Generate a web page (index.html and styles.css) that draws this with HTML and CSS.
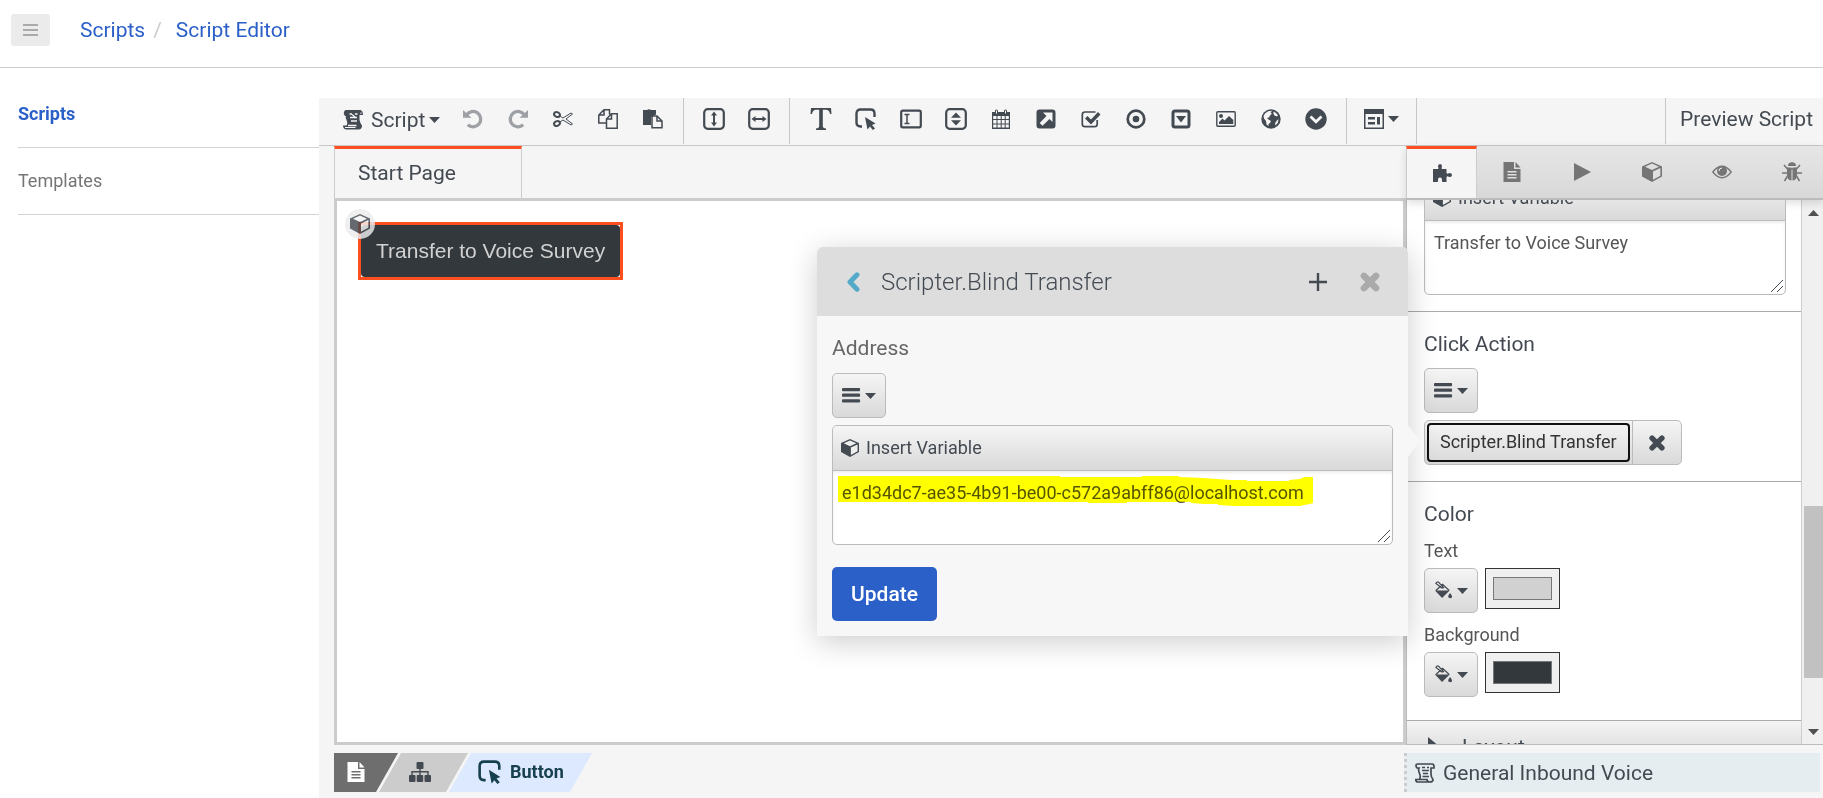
FILE: index.html
```html
<!DOCTYPE html>
<html lang="en">
<head>
<meta charset="utf-8">
<title>Script Editor</title>
<link rel="stylesheet" href="styles.css">
</head>
<body>
<svg class="symbols" aria-hidden="true">
  <symbol id="cube" viewBox="0 0 20 20"><path d="M10 0 20 4.500V14.500L10 20 0 14.500V4.500Z"/><path class="paper" d="M10 1.600 17 4.700 10 8 3 4.700Z M18.400 6 V13.700 L11 17.800 V9.400Z"/></symbol>
  <symbol id="doc" viewBox="0 0 20 20"><path d="M1.500 0H12V7H18.500V20H1.500Z M13.500 0 18.500 5.500H13.500Z"/><path class="cut" d="M5.500 9H14.500V10.400H5.500Z M5.500 12H14.500V13.400H5.500Z M5.500 15H14.500V16.400H5.500Z"/></symbol>
  <symbol id="bars" viewBox="0 0 20 20"><rect x="0" y="2" width="19" height="3.400" rx="1"/><rect x="0" y="8" width="19" height="3.400" rx="1"/><rect x="0" y="14" width="19" height="3.400" rx="1"/></symbol>
  <symbol id="caret" viewBox="0 0 11 6"><path d="M0 0H11L5.500 6Z"/></symbol>
  <symbol id="grip" viewBox="0 0 12 12"><path class="line" stroke-width="1" d="M0 12 12 0M6 12 12 6"/></symbol>
  <symbol id="turn" viewBox="0 0 20 20"><path d="M0 1 8.500 8.800H0Z"/><path class="line" stroke-width="3.300" d="M3.500 6A7.700 7.700 0 1 1 4.800 15.800"/></symbol>
  <symbol id="cross" viewBox="0 0 20 20"><path class="line" stroke-width="6" stroke-linecap="round" d="M4.500 4.500 15.500 15.500M15.500 4.500 4.500 15.500"/></symbol>
  <symbol id="pointer" viewBox="0 0 22 22"><path class="line" stroke-width="2.400" d="M7 18.500H5.500Q1.500 18.500 1.500 14.500V5.500Q1.500 1.500 5.500 1.500H15.500Q19.500 1.500 19.500 5.500V9"/><path d="M10 9 20.500 15.500 17 17 20 20.500 17.800 22 15 18.500 12.500 21.500Z"/></symbol>
  <symbol id="bucket" viewBox="0 0 20 20"><path d="M1 10H16.500L8.500 18Z M17 12.500Q20 16.500 18.500 17.600Q17 18.600 15.300 17.300Q14 16 17 12.500Z"/><path class="line" stroke-width="1.300" d="M2 10 9 3.500 16 10M2 2.500Q4-.5 6 2.500L10 7Q8 8 6.500 6Z"/></symbol>
  <symbol id="scroll" viewBox="0 0 20 20"><path class="line" stroke-width="1.700" d="M3 1H17Q19 1 19 3.500V5H16V11Q16 14 18 16.500Q18 19 15 19H3Q.8 19 .8 16.500H12Q12 19 15 19M4.500 16Q6 14 4.500 10.500Q3 7 4 5H2Q1 4 1 2.500Q1 1 3 1"/><path class="line" stroke-width="1.500" d="M7 4.500H10M7 7.500H14M8 10.500H13M12 4.500H14M7.500 13.500H14"/></symbol>
</svg>

<header class="topbar">
  <button class="menu-toggle" aria-label="Toggle menu"><svg viewBox="0 0 15 12"><path d="M0 0H15V2H0ZM0 5H15V7H0ZM0 10H15V12H0Z"/></svg></button>
  <nav class="crumbs" aria-label="Breadcrumb"><a href="#">Scripts</a><span class="slash">/</span><a href="#">Script Editor</a></nav>
</header>

<div class="page">
  <nav class="side">
    <a class="side-link current" href="#">Scripts</a>
    <a class="side-link" href="#">Templates</a>
  </nav>

  <main class="editor">
    <div class="toolbar">
      <button class="script-menu"><svg class="i20" viewBox="0 0 20 20"><path d="M3 0H17.500Q20 1 20 5H16.500V10Q17 13 19 15.500Q19 19.500 15.500 19.500H3Q0 19 0 15.500H3.500Q5 14 3.500 10Q2 7 3 6H2Q0 4.500 1 2Q1.500 0 3 0Z"/><path class="line light" stroke-width="1.300" d="M6.500 4H9M12 4H14.500M7 7.500H14M8 11H14M9 4.500 12 7M5 15.500H13.500"/><path class="line light" stroke-width="1" d="M2 17.500H12.500M18 2.500V4"/></svg><span>Script</span><svg class="caret"><use href="#caret"/></svg></button>
      <div class="group">
        <button class="tool off" aria-label="Undo"><svg class="i20"><use href="#turn"/></svg></button>
        <button class="tool off flip" aria-label="Redo"><svg class="i20"><use href="#turn"/></svg></button>
        <button class="tool" aria-label="Cut"><svg class="i20" viewBox="0 0 20 20"><g class="line"><ellipse cx="4" cy="5.500" rx="3" ry="2.300" stroke-width="2" transform="rotate(25 4 5.500)"/><ellipse cx="4" cy="14.500" rx="3" ry="2.300" stroke-width="2" transform="rotate(-25 4 14.500)"/><path stroke-width="1" d="M7 7 10 9 18 4 19.500 5 13 10 19.500 15 18 16 10 11 7 13"/></g></svg></button>
        <button class="tool" aria-label="Copy"><svg class="i20" viewBox="0 0 20 20"><path class="line" stroke-width="1.500" d="M8 14H.8V6L6 .8H11.500V5.500M6 1V6H1M8.500 19.200V10L13.500 4.800H19.200V19.200ZM13.500 5V10H8.500"/></svg></button>
        <button class="tool" aria-label="Paste"><svg class="i20" viewBox="0 0 20 20"><path d="M0 1H4Q6-.5 8 1H13V5.500L8 8V16H0Z"/><path class="line" stroke-width="1.500" d="M9 7H14L19 12V18.700H9ZM14 7V12H19"/></svg></button>
      </div>
      <div class="group sizing">
        <button class="tool" aria-label="Vertical container"><svg class="i22" viewBox="0 0 22 22"><rect class="line" x="1.200" y="1.200" width="19.600" height="19.600" rx="3.500" stroke-width="2.200"/><path d="M11 3.500 14 7.500H12V14.500H14L11 18.500 8 14.500H10V7.500H8Z"/></svg></button>
        <button class="tool" aria-label="Horizontal container"><svg class="i22" viewBox="0 0 22 22"><rect class="line" x="1.200" y="1.200" width="19.600" height="19.600" rx="3.500" stroke-width="2.200"/><path d="M3.500 11 7.500 8V10H14.500V8L18.500 11 14.500 14V12H7.500V14Z"/></svg></button>
      </div>
      <div class="group">
        <button class="tool" aria-label="Text"><svg class="i22" viewBox="0 0 22 22"><path d="M1 0H21L21.500 6H20Q19.500 2 16 1.800H12.800V18Q12.800 20.300 16 20.500V22H6V20.500Q9.200 20.300 9.200 18V1.800H6Q2.500 2 2 6H.5Z"/></svg></button>
        <button class="tool" aria-label="Button"><svg class="i22"><use href="#pointer"/></svg></button>
        <button class="tool" aria-label="Text input"><svg class="i22" viewBox="0 0 22 22"><rect class="line" x="1.200" y="2.700" width="19.600" height="16.600" rx="1.500" stroke-width="2.200"/><path class="line" stroke-width="1.500" d="M4.500 6.500H9.500M4.500 15.500H9.500M7 6.500V15.500"/></svg></button>
        <button class="tool" aria-label="Number input"><svg class="i22" viewBox="0 0 22 22"><rect class="line" x="1.200" y="1.200" width="19.600" height="19.600" rx="3.500" stroke-width="2.200"/><path d="M11 4.500 16 9.800H6ZM11 17.500 16 12.200H6Z"/></svg></button>
        <button class="tool" aria-label="Date picker"><svg class="i20" viewBox="0 0 20 20"><path d="M1 3H4V1.500Q5.500-.5 7 1.500V3H13V1.500Q14.500-.5 16 1.500V3H19V20H1Z"/><path class="line light" stroke-width="1" d="M5.500 1.500V4.500M14.500 1.500V4.500"/><path class="paper" d="M2.200 7H5.500V10H2.200ZM6.500 7H9.700V10H6.500ZM10.700 7H13.700V10H10.700ZM14.700 7H17.800V10H14.700ZM2.200 11H5.500V14.500H2.200ZM6.500 11H9.700V14.500H6.500ZM10.700 11H13.700V14.500H10.700ZM14.700 11H17.800V14.500H14.700ZM2.200 15.500H5.500V18.500H2.200ZM6.500 15.500H9.700V18.500H6.500ZM10.700 15.500H13.700V18.500H10.700ZM14.700 15.500H17.800V18.500H14.700Z"/></svg></button>
        <button class="tool" aria-label="Hyperlink"><svg class="i20" viewBox="0 0 20 20"><rect x=".5" y=".5" width="19" height="19" rx="3"/><path class="paper" d="M7 3.500H16.500V13L13.500 10 6.500 16.800 3.700 14 10.500 7Z"/></svg></button>
        <button class="tool" aria-label="Checkbox"><svg class="i20" viewBox="0 0 20 20"><path class="line" stroke-width="1.700" d="M14.500 3H4Q1.300 3 1.300 5.700V15Q1.300 17.700 4 17.700H13.500Q16.200 17.700 16.200 15V11"/><path d="M4 9.500 6.500 7 10 10.500 17 3 19.500 5.500 10 15.500Z"/></svg></button>
        <button class="tool" aria-label="Radio button"><svg class="i20" viewBox="0 0 20 20"><circle class="line" cx="10" cy="10" r="8.300" stroke-width="2.700"/><circle cx="10" cy="10" r="3.300"/></svg></button>
        <button class="tool" aria-label="Dropdown"><svg class="i20" viewBox="0 0 20 20"><rect class="line" x="2" y="2" width="16" height="16" rx="2" stroke-width="3"/><path d="M5 7H15L10 13.500Z"/></svg></button>
        <button class="tool" aria-label="Image"><svg class="i20" viewBox="0 0 20 20"><rect class="line" x=".8" y="2.800" width="18.400" height="14.400" rx="1" stroke-width="1.400"/><circle cx="5" cy="7" r="2"/><path d="M3 15V13L6.500 9.500 8.500 11.500 13 7 17.300 11V15Z"/></svg></button>
        <button class="tool" aria-label="Web page"><svg class="i20" viewBox="0 0 20 20"><circle cx="10" cy="10" r="9.700"/><path class="paper" d="M4 4.500 7 2.200 11 1.800 9.500 3.800 11 4.500 9 6.500 8 8.500 6 9 7.500 10.500 10 12 9 14 7.500 15 7.500 17 5.500 15.500 5 12 3 9.500 2.500 7ZM12.500 2.500 15 4 17 6.500 15.500 7.500 13.500 6.500 12.500 5ZM17.500 10 17 13.500 14.500 16.500 14 14.500 15.500 12Z"/></svg></button>
        <button class="tool" aria-label="Collapse section"><svg class="i22" viewBox="0 0 22 22"><circle cx="11" cy="11" r="10.700"/><path class="line light" stroke-width="2.800" d="M5.500 8.500 11 13.800 16.500 8.500"/></svg></button>
      </div>
      <button class="layout-menu" aria-label="Layout"><svg class="i20" viewBox="0 0 20 20"><path d="M0 0H20V20H0Z"/><path class="paper" d="M1.500 5H18.500V18.500H1.500Z"/><path d="M4 8H11V10.500H4ZM4 13H11V15.500H4ZM13 8H16V15.500H13Z"/></svg><svg class="caret"><use href="#caret"/></svg></button>
      <button class="preview">Preview Script</button>
    </div>

    <div class="work">
      <section class="stage">
        <div class="page-tabs"><button class="page-tab">Start Page</button></div>
        <div class="canvas">
          <div class="selected">
            <button class="script-button">Transfer to Voice Survey</button>
            <span class="badge"><svg class="i20"><use href="#cube"/></svg></span>
          </div>
        </div>
      </section>

      <aside class="panel">
        <div class="panel-tabs">
          <button class="panel-tab active" aria-label="Components"><svg class="i20" viewBox="0 0 20 20"><path d="M1 6H6.200Q7 5.200 6 3.500Q6 1 8 1Q10.200 1 10 3.500Q9 5.200 10 6H14.500V10Q15.500 11.500 17 10Q20 10 20 12Q20 14.500 17 14Q15.500 12.500 14.500 14V19H10.500Q9.500 18 10 16.500Q10 14.500 8 14.500Q6 14.500 6 16.500Q6.500 18 5.500 19H1Z"/></svg></button>
          <button class="panel-tab" aria-label="Page"><svg class="i20"><use href="#doc"/></svg></button>
          <button class="panel-tab" aria-label="Actions"><svg class="i20" viewBox="0 0 20 20"><path d="M2 1 19 10 2 19Z"/></svg></button>
          <button class="panel-tab" aria-label="Variables"><svg class="i20"><use href="#cube"/></svg></button>
          <button class="panel-tab" aria-label="Visibility"><svg class="i20" viewBox="0 0 20 20"><path class="line" stroke-width="1.300" d="M.8 10Q10-1.500 19.200 10Q10 21.500.8 10Z"/><circle cx="10" cy="9" r="5"/><path class="line light" stroke-width="1" d="M7 9Q7 6 10 6"/></svg></button>
          <button class="panel-tab" aria-label="Debug"><svg class="i20" viewBox="0 0 20 20"><path d="M6 4Q6 .3 10 .3T14 4ZM5 5.500H9.500V18.500Q5 18 5 13ZM10.500 5.500H15V13Q15 18 10.500 18.500Z"/><path class="line" stroke-width="1.500" d="M2 3 5.500 7H14.500L18 3M0 11H5M15 11H20M5.500 14 2.500 19M14.500 14 17.500 19"/></svg></button>
        </div>
        <div class="panel-body">
          <div class="props">
            <section class="prop clipped">
              <div class="variable-box">
                <button class="insert"><svg class="i18"><use href="#cube"/></svg>Insert Variable</button>
                <textarea class="value" aria-label="Button text">Transfer to Voice Survey</textarea>
                <svg class="grip"><use href="#grip"/></svg>
              </div>
            </section>
            <section class="prop">
              <h2>Click Action</h2>
              <button class="chip" aria-label="Action options"><svg class="i19"><use href="#bars"/></svg><svg class="caret"><use href="#caret"/></svg></button>
              <div class="action"><button class="action-name">Scripter.Blind Transfer</button><button class="action-remove" aria-label="Remove action"><svg class="i18"><use href="#cross"/></svg></button></div>
            </section>
            <section class="prop colors">
              <h2>Color</h2>
              <label for="text-color">Text</label>
              <div class="pick"><button class="chip" aria-label="Text color options"><svg class="i19"><use href="#bucket"/></svg><svg class="caret"><use href="#caret"/></svg></button><input id="text-color" type="color" value="#d1d1d1"></div>
              <label for="background-color">Background</label>
              <div class="pick"><button class="chip" aria-label="Background color options"><svg class="i19"><use href="#bucket"/></svg><svg class="caret"><use href="#caret"/></svg></button><input id="background-color" type="color" value="#33383d"></div>
            </section>
            <button class="fold"><svg viewBox="0 0 12 20"><path d="M0 0 12 10 0 20Z"/></svg>Layout</button>
          </div>
          <div class="scrollbar"><svg class="caret"><path d="M0 6H11L5.500 0Z"/></svg><div class="thumb"></div><svg class="caret"><use href="#caret"/></svg></div>
        </div>

        <div class="popup" role="dialog" aria-labelledby="popup-title">
          <div class="popup-head">
            <button class="back" aria-label="Back"><svg class="i20" viewBox="0 0 20 20"><path class="line" stroke-width="5" stroke-linejoin="round" stroke-linecap="round" d="M13 2.800 6 10 13 17.200"/></svg></button>
            <h2 id="popup-title">Scripter.Blind Transfer</h2>
            <button class="add" aria-label="Add"><svg class="i18" viewBox="0 0 18 18"><path d="M7.800 0H10.200V7.800H18V10.200H10.200V18H7.800V10.200H0V7.800H7.800Z"/></svg></button>
            <button class="close" aria-label="Close"><svg class="i22"><use href="#cross"/></svg></button>
          </div>
          <div class="popup-body">
            <label for="address">Address</label>
            <button class="chip" aria-label="Address options"><svg class="i19"><use href="#bars"/></svg><svg class="caret"><use href="#caret"/></svg></button>
            <div class="variable-box">
              <button class="insert"><svg class="i18"><use href="#cube"/></svg>Insert Variable</button>
              <textarea class="value" id="address" spellcheck="false">e1d34dc7-ae35-4b91-be00-c572a9abff86@localhost.com</textarea>
              <svg class="marker" viewBox="0 0 475 30"><path d="M0 0H222V1H304V0H341V1L365 2 379 3 393 4H409V5H451V4L462 3 464 2 467 1H475V27L472 28 466 29 463 30H396L380 29V28H366L353 27V26H289V27H250V26H0Z"/></svg>
              <svg class="grip"><use href="#grip"/></svg>
            </div>
            <button class="update">Update</button>
          </div>
        </div>
      </aside>
    </div>

    <footer class="status">
      <nav class="path" aria-label="Component path">
        <button class="step page-step" aria-label="Page"><svg class="i20"><use href="#doc"/></svg></button>
        <button class="step tree-step" aria-label="Component tree"><svg class="i22" viewBox="0 0 22 20"><rect x="7.500" y="0" width="7" height="7" rx="1"/><rect x="0" y="13" width="6.500" height="7" rx="1"/><rect x="7.700" y="13" width="6.500" height="7" rx="1"/><rect x="15.500" y="13" width="6.500" height="7" rx="1"/><path class="line" stroke-width="1.400" d="M11 7V13M3 13V9.800H19V13"/></svg></button>
        <button class="step button-step"><svg class="i24"><use href="#pointer"/></svg>Button</button>
      </nav>
      <div class="script-name"><svg class="i20"><use href="#scroll"/></svg>General Inbound Voice</div>
    </footer>
  </main>
</div>
</body>
</html>
```

FILE: styles.css
```css
* { box-sizing: border-box; }

body {
  margin: 0;
  height: 100vh;
  display: flex;
  flex-direction: column;
  overflow: hidden;
  background: #fff;
  color: #444a52;
  font: 18px/24px Roboto, sans-serif;
}

button {
  padding: 0;
  border: 0;
  background: none;
  color: inherit;
  font: inherit;
}

a { text-decoration: none; }
h2 { margin: 0; font-size: 21px; font-weight: 400; }
svg { display: block; flex: none; fill: currentColor; }
.symbols { position: absolute; width: 0; height: 0; }
.line { fill: none; stroke: currentColor; }
.light { stroke: #f5f5f5; }
.paper, .cut { fill: var(--paper, #f5f5f5); }
.i18 { width: 18px; height: 18px; }
.i19 { width: 19px; height: 19px; }
.i20 { width: 20px; height: 20px; }
.i22 { width: 22px; height: 22px; }
.i24 { width: 24px; height: 24px; }
.caret { width: 11px; height: 6px; }

/* Top bar */
.topbar {
  flex: none;
  display: flex;
  align-items: center;
  height: 68px;
  padding: 0 11px 7px;
  border-bottom: 1px solid #ccc;
}
.menu-toggle {
  display: grid;
  place-items: center;
  width: 39px;
  height: 32px;
  border-radius: 3px;
  background: #ebebeb;
  color: #aaa;
}
.menu-toggle svg { width: 15px; height: 12px; }
.crumbs { display: flex; margin-left: 30px; font-size: 21px; }
.crumbs a { color: #2a60c8; }
.slash { margin: 0 14px 0 8px; color: #ccc; }

.page { flex: 1; min-height: 0; display: flex; }

/* Side navigation */
.side { flex: none; width: 319px; padding: 13px 0 0 18px; }
.side-link {
  display: block;
  padding: 21px 0;
  border-bottom: 1px solid #d3d3d3;
  color: #757575;
}
.side-link.current { color: #2a60c8; font-weight: 700; }

/* Editor */
.editor {
  flex: 1;
  min-width: 0;
  display: flex;
  flex-direction: column;
  margin-top: 30px;
  background: #f5f5f5;
}
.toolbar {
  flex: none;
  display: flex;
  height: 48px;
  padding-left: 24px;
  border-bottom: 1px solid #c8c8c8;
}
.toolbar > * { height: 46px; }
.script-menu {
  display: flex;
  align-items: center;
  width: 99px;
  padding-bottom: 2px;
  font-size: 21px;
}
.script-menu span { margin: 0 4px 0 8px; }
.group { display: flex; padding: 0 8px; border-right: 1px solid #c8c8c8; }
.sizing { padding-left: 7px; }
.tool { display: grid; place-items: center; width: 45px; padding-bottom: 4px; }
.tool.off { color: #9da0a4; }
.flip svg { transform: scaleX(-1); }
.layout-menu {
  display: flex;
  align-items: center;
  gap: 4px;
  padding: 0 17px 4px;
  border-right: 1px solid #c8c8c8;
}
.preview {
  margin-left: auto;
  padding: 0 10px 4px 14px;
  border-left: 1px solid #c8c8c8;
  font-size: 21px;
}

.work { flex: 1; min-height: 0; display: flex; }
.stage { flex: 1; min-width: 0; display: flex; flex-direction: column; padding-left: 15px; }
.page-tabs { flex: none; display: flex; height: 52px; }
.page-tab {
  width: 188px;
  padding: 0 0 2px 23px;
  border: 1px solid #ccc;
  border-top: 3px solid #ff4f1f;
  border-bottom: 0;
  font-size: 21px;
  text-align: left;
}
.canvas {
  flex: 1;
  padding: 21px;
  border: 3px solid #ccc;
  background: #fff;
}
.selected { position: relative; display: inline-flex; border: 3px solid #ff4f1f; }
.script-button {
  height: 52px;
  padding: 0 15px;
  border-radius: 4px;
  background: #33383d;
  color: #d1d1d1;
  font: 21px "Liberation Sans", sans-serif;
}
.badge {
  position: absolute;
  top: -16px;
  left: -16px;
  display: grid;
  place-items: center;
  width: 30px;
  height: 30px;
  border-radius: 50%;
  background: #ececec;
  opacity: .82;
}

/* Properties panel */
.panel {
  position: relative;
  flex: none;
  display: flex;
  flex-direction: column;
  width: 417px;
}
.panel-tabs {
  position: relative;
  flex: none;
  display: flex;
  height: 54px;
  overflow: hidden;
  border-bottom: 2px solid #bbb;
  background: linear-gradient(#e6e6e6, #d8d8d8);
  box-shadow: 0 3px 8px #0002;
}
.panel-tab {
  --paper: #dfdfdf;
  display: grid;
  place-items: center;
  flex: none;
  width: 70px;
  color: #757575;
}
.panel-tab.active {
  width: 71px;
  padding-bottom: 2px;
  border: 1px solid #ccc;
  border-width: 3px 1px 0;
  border-top-color: #ff4f1f;
  background: #f5f5f5;
  color: #444a52;
}
.panel-body {
  flex: 1;
  min-height: 0;
  display: flex;
  border: 1px solid #bbb;
  border-width: 0 0 1px 1px;
}
.props {
  flex: 1;
  display: flex;
  flex-direction: column;
  overflow: hidden;
  background: #fff;
}
.prop { flex: none; padding: 20px 15px 16px 17px; border-bottom: 1px solid #aaa; }
.prop.clipped { margin-top: -45px; }
.prop h2 { height: 36px; }
.variable-box {
  position: relative;
  display: flex;
  flex-direction: column;
  border: 1px solid #bbb;
  border-radius: 5px;
  background: #fff;
}
.insert {
  --paper: #eee;
  display: flex;
  align-items: center;
  gap: 7px;
  height: 45px;
  padding: 0 0 1px 8px;
  border-bottom: 1px solid #bbb;
  border-radius: 5px 5px 0 0;
  background: linear-gradient(#f5f5f5, #d9d9d9);
}
.value {
  display: block;
  width: 100%;
  height: 73px;
  padding: 10px 9px;
  border: 0;
  outline: 0;
  background: none;
  box-shadow: inset 0 2px 3px #0001;
  color: #555;
  font: inherit;
  resize: none;
}
.grip {
  position: absolute;
  right: 2px;
  bottom: 2px;
  width: 12px;
  height: 12px;
  pointer-events: none;
}
.chip {
  display: flex;
  align-items: center;
  justify-content: center;
  gap: 4px;
  width: 54px;
  height: 45px;
  border: 1px solid #bbb;
  border-radius: 5px;
  background: linear-gradient(#f5f5f5, #d9d9d9);
}
.action {
  display: inline-flex;
  height: 45px;
  margin-top: 7px;
  border: 1px solid #bbb;
  border-radius: 5px;
  background: linear-gradient(#f5f5f5, #d9d9d9);
  vertical-align: top;
}
.action-name {
  margin: 2px;
  padding: 0 11px 1px;
  border: 2px solid #111;
  border-radius: 4px;
  color: #333;
}
.action-remove { display: grid; place-items: center; width: 49px; border-left: 1px solid #bbb; }
.colors { padding-bottom: 13px; }
.colors h2 { height: 37px; }
.colors label { display: block; height: 29px; color: #555; }
.pick { display: flex; align-items: flex-start; gap: 7px; margin-bottom: 10px; height: 45px; }
.colors input {
  width: 75px;
  height: 41px;
  padding: 8px 7px;
  border: 1px solid #333;
  background: #efefef;
}
.colors input::-webkit-color-swatch-wrapper { padding: 0; }
.colors input::-webkit-color-swatch { border: 1px solid #777; border-radius: 0; }
.fold {
  flex: none;
  display: flex;
  align-items: center;
  gap: 22px;
  height: 52px;
  padding-left: 21px;
  background: linear-gradient(#f5f5f5, #ccc);
  font-size: 21px;
}
.fold svg { width: 12px; height: 20px; }
.scrollbar {
  flex: none;
  display: flex;
  flex-direction: column;
  align-items: center;
  width: 22px;
  padding: 10px 0 9px 2px;
  border-left: 1px solid #ccc;
  background: #f0f0f0;
  color: #505050;
}
.thumb { width: 100%; height: 172px; margin: auto 0 51px; background: #c1c1c1; }

/* Action popup */
.popup {
  position: absolute;
  top: 101px;
  right: 415px;
  width: 591px;
  border-radius: 6px 6px 0 0;
  background: #f7f7f7;
  box-shadow: 0 6px 30px #0003;
}
.popup::after {
  content: "";
  position: absolute;
  top: 178px;
  left: 100%;
  border: 16px solid transparent;
  border-left: 12px solid #f7f7f7;
  border-right: 0;
}
.popup-head {
  display: flex;
  align-items: center;
  height: 69px;
  padding: 0 27px;
  border-radius: 6px 6px 0 0;
  background: #ddd;
}
.popup-head h2 { margin-left: 17px; font-size: 24px; font-weight: 300; line-height: 32px; }
.back { color: #55a9c9; }
.add { margin-left: auto; }
.close { margin-left: 32px; color: #aaa; }
.popup-body { padding: 20px 15px 15px; }
.popup-body label { display: block; height: 37px; color: #666; font-size: 21px; }
.popup-body .variable-box { margin: 7px 0 22px; }
.marker {
  position: absolute;
  top: 50px;
  left: 5px;
  width: 475px;
  height: 30px;
  fill: #ff0;
  mix-blend-mode: multiply;
  pointer-events: none;
}
.update {
  height: 54px;
  padding: 0 19px;
  border-radius: 5px;
  background: #2a60c8;
  color: #fff;
  font-size: 21px;
  font-weight: 500;
}

/* Status bar */
.status {
  flex: none;
  display: flex;
  justify-content: space-between;
  height: 53px;
  padding: 8px 3px 6px 15px;
}
.path { display: flex; }
.step {
  display: flex;
  align-items: center;
  gap: 8px;
  padding-bottom: 2px;
  clip-path: polygon(22px 0, 100% 0, calc(100% - 22px) 100%, 0 100%);
}
.page-step {
  --paper: #6e6e6e;
  width: 64px;
  padding-left: 12px;
  background: #6e6e6e;
  color: #fff;
  clip-path: polygon(0 0, 100% 0, calc(100% - 22px) 100%, 0 100%);
}
.tree-step { width: 89px; margin-left: -19px; padding-left: 30px; background: #ccc; }
.button-step {
  width: 143px;
  margin-left: -19px;
  padding-left: 29px;
  background: #dde9ff;
  color: #17404f;
  font-weight: 700;
}
.script-name {
  display: flex;
  align-items: center;
  gap: 8px;
  width: 416px;
  padding-left: 8px;
  border-left: 3px dotted #ccc;
  background: #e5edf1;
  font-size: 21px;
}
```
